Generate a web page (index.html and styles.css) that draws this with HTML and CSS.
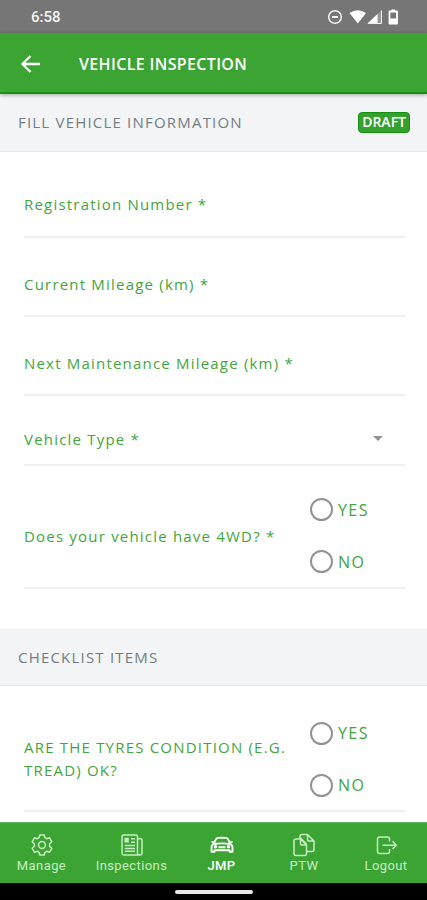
FILE: index.html
```html
<!DOCTYPE html>
<html lang="en">
<head>
    <meta charset="UTF-8">
    <meta name="viewport" content="width=device-width, initial-scale=1.0">
    <title>Vehicle Inspection</title>
    <link rel="stylesheet" href="styles.css">
</head>
<body>
    <div class="status-bar">
        <span class="time">6:58</span>
        <svg class="status-icons" width="72" height="18" viewBox="0 0 72 18">
            <circle cx="7" cy="9" r="6.300" fill="none" stroke="#f4f4f4" stroke-width="1.5"/>
            <path d="M4 9h6" stroke="#f4f4f4" stroke-width="2"/>
            <path d="M21.500 5q8.300-5.500 16.500 0l-8.200 10.500z" fill="#fff"/>
            <path d="M53.500 2v13.500H39.500z" fill="#999"/>
            <path d="M49.500 6v9.500H39.500z" fill="#fff"/>
            <path d="M53.500 2.500v13H40" fill="none" stroke="#eee" stroke-width="1"/>
            <path d="M61.500 3.500h7.500v12h-7.500z" fill="none" stroke="#fff" stroke-width="1.800" stroke-linejoin="round"/>
            <path d="M63.500 1.500h3.500v2h-3.500zM61.500 10.500H69V15h-7.500z" fill="#fff"/>
        </svg>
    </div>

    <header class="toolbar">
        <svg class="back" width="22" height="20" viewBox="0 0 22 20">
            <path d="M10.500 2L2.500 10l8 8M2.500 10H20" fill="none" stroke="#fff" stroke-width="2.300"/>
        </svg>
        <h1>VEHICLE INSPECTION</h1>
    </header>

    <main>
        <div class="section-head">
            <h2>FILL VEHICLE INFORMATION</h2>
            <span class="badge">DRAFT</span>
        </div>
        <form class="fields">
            <div class="field first"><label>Registration Number *</label></div>
            <div class="field"><label>Current Mileage (km) *</label></div>
            <div class="field"><label>Next Maintenance Mileage (km) *</label></div>
            <div class="field select"><label>Vehicle Type *</label><span class="caret"></span></div>
            <div class="field choice">
                <label>Does your vehicle have 4WD? *</label>
                <div class="options">
                    <span class="option"><i class="radio"></i>YES</span>
                    <span class="option"><i class="radio"></i>NO</span>
                </div>
            </div>
        </form>

        <div class="section-head checklist">
            <h2>CHECKLIST ITEMS</h2>
        </div>
        <form class="fields">
            <div class="field choice item">
                <label>ARE THE TYRES CONDITION (E.G. TREAD) OK?</label>
                <div class="options">
                    <span class="option"><i class="radio"></i>YES</span>
                    <span class="option"><i class="radio"></i>NO</span>
                </div>
            </div>
        </form>
    </main>

    <nav class="tabs">
        <a class="tab">
            <svg width="24" height="24" viewBox="0 0 24 24">
                <path d="M9.800 1.900h4.400l.7 2.800 1.800 1 2.900-.9 2.200 3.900-2.200 2v2.600l2.200 2-2.200 3.900-2.900-.9-1.800 1-.7 2.800H9.800l-.7-2.800-1.800-1-2.900.9-2.200-3.900 2.200-2v-2.600l-2.200-2 2.200-3.900 2.900.9 1.800-1z"/>
                <circle cx="12" cy="12" r="3.400"/>
            </svg>
            <span>Manage</span>
        </a>
        <a class="tab">
            <svg width="24" height="24" viewBox="0 0 24 24">
                <path d="M17.500 20V3.500q0-1.500-1.500-1.500H3.500Q2 2 2 3.500v16.800Q2 22 3.700 22H20q2 0 2-2V7q0-1.200-1.200-1.200h-3.300M17.500 20q0 2 2 2M11 5.800h4M11 9.200h4M4.800 12.600H15M4.800 15.400H15M4.800 18.200H15"/>
                <path class="solid" d="M4.500 4.800h4.300v4.800H4.500z"/>
            </svg>
            <span>Inspections</span>
        </a>
        <a class="tab active">
            <svg width="24" height="24" viewBox="0 0 24 24">
                <path d="M3.500 11l2.400-4.600Q6.500 5 8 4.900q4-.4 8 0 1.500.1 2.100 1.500l2.400 4.600M3.500 11q-2 1.200-2 3.300v4.400h3v-1.500h15v1.500h3v-4.400q0-2.100-2-3.300-8.500-1.300-17 0zM1.500 9h2M20.500 9h2M8.500 14.300h7"/>
                <circle cx="5.500" cy="13.800" r=".8"/>
                <circle cx="18.500" cy="13.800" r=".8"/>
            </svg>
            <span>JMP</span>
        </a>
        <a class="tab">
            <svg width="24" height="24" viewBox="0 0 24 24">
                <path d="M8.500 6H4Q2 6 2 8v12.500q0 2 2 2h8.500q2 0 2-2V12L8.500 6v4.500q0 1.500 1.500 1.500h4.500"/>
                <path d="M8 6V3.500q0-2 2-2h5.500l6.500 6.500v8.500q0 2-2 2h-5.500M15.500 1.500V6.500q0 1.500 1.500 1.500h5M8.500 5l6 6"/>
            </svg>
            <span>PTW</span>
        </a>
        <a class="tab">
            <svg width="24" height="24" viewBox="0 0 24 24">
                <path d="M15.500 8.500V6q0-2-2-2h-8q-2 0-2 2v12.500q0 2 2 2h8q2 0 2-2V16M8.500 12.200h13.500M18.500 8.300l3.800 3.900-3.800 3.900"/>
            </svg>
            <span>Logout</span>
        </a>
    </nav>
    <div class="home-bar"><span></span></div>
</body>
</html>
```
FILE: styles.css
```css
* {
    box-sizing: border-box;
}
body {
    margin: 0;
    height: 900px;
    display: flex;
    flex-direction: column;
    overflow: hidden;
    background: #fff;
    font-family: "Open Sans", "Noto Sans", sans-serif;
}
.status-bar {
    height: 33px;
    flex: none;
    display: flex;
    align-items: center;
    justify-content: space-between;
    padding: 1px 27px 0 31px;
    background: #767676;
    color: #f4f4f4;
}
.time {
    font-family: Roboto, sans-serif;
    font-size: 15px;
    font-weight: 500;
}
.toolbar {
    height: 61px;
    flex: none;
    display: flex;
    align-items: center;
    padding: 2px 0 0 20px;
    background: #3ba433;
    border-bottom: 2px solid #15930f;
    box-shadow: 0 1px 4px rgba(0, 0, 0, 0.35);
    z-index: 1;
}
.toolbar h1 {
    margin: 0 0 0 37px;
    color: #fff;
    font-size: 16px;
    font-weight: 600;
    letter-spacing: 0.35px;
}
main {
    flex: 1;
    overflow: hidden;
}
.section-head {
    height: 58px;
    display: flex;
    align-items: center;
    justify-content: space-between;
    padding: 0 17px 1px 18px;
    background: #f2f4f6;
    border-bottom: 1px solid #e4e6e7;
}
.section-head h2 {
    margin: 0;
    color: #757d84;
    font-size: 15px;
    font-weight: 400;
    letter-spacing: 1.2px;
}
.section-head.checklist {
    height: 57px;
    margin-top: 40px;
}
.badge {
    height: 21px;
    padding: 0 3px;
    border: 1px solid #169010;
    border-radius: 4px;
    background: #36a02f;
    color: #fff;
    font-size: 14px;
    font-weight: 600;
    line-height: 18px;
}
.fields {
    padding: 0 22px 0 24px;
}
.field {
    height: 79px;
    display: flex;
    align-items: center;
    justify-content: space-between;
    padding-top: 15px;
    border-bottom: 2px solid #f0f0f0;
    color: #43a53d;
    font-size: 15px;
    letter-spacing: 1.2px;
}
.field.first {
    height: 86px;
    padding-top: 20px;
}
.field.select {
    height: 70px;
    padding: 17px 22px 0 0;
}
.caret {
    border: 5px solid transparent;
    border-top-color: #929292;
    border-bottom: 0;
}
.field.choice {
    height: 123px;
    padding-top: 18px;
}
.field.choice.item {
    height: 126px;
    padding-top: 23px;
    line-height: 23px;
}
.choice label {
    width: 275px;
}
.item label {
    padding-bottom: 2px;
}
.options {
    width: 95px;
    display: flex;
    flex-direction: column;
    gap: 28px;
}
.option {
    height: 24px;
    display: flex;
    align-items: center;
    gap: 5px;
    font-size: 16px;
    letter-spacing: 1.4px;
}
.radio {
    width: 23px;
    height: 23px;
    border: 2px solid #929292;
    border-radius: 50%;
}
.tabs {
    height: 61px;
    flex: none;
    display: grid;
    grid-template-columns: 83px 97px 83px 82px 82px;
    background: #3ba433;
    border-top: 1px solid #62b75c;
}
.tab {
    display: flex;
    flex-direction: column;
    align-items: center;
    gap: 1px;
    padding-top: 10px;
    color: #c7edc3;
    font-family: Roboto, sans-serif;
    font-size: 13px;
    line-height: 16px;
    letter-spacing: 0.4px;
}
.tab svg {
    fill: none;
    stroke: currentColor;
    stroke-width: 1.5;
    stroke-linejoin: round;
}
.tab .solid {
    fill: currentColor;
    stroke: none;
}
.tab.active {
    color: #fff;
    font-weight: 500;
}
.tab.active svg {
    stroke-width: 1.9;
}
.home-bar {
    height: 17px;
    flex: none;
    display: flex;
    justify-content: center;
    padding-top: 7px;
    background: #000;
}
.home-bar span {
    width: 78px;
    height: 4px;
    border-radius: 2px;
    background: #e8e8e8;
}
```
